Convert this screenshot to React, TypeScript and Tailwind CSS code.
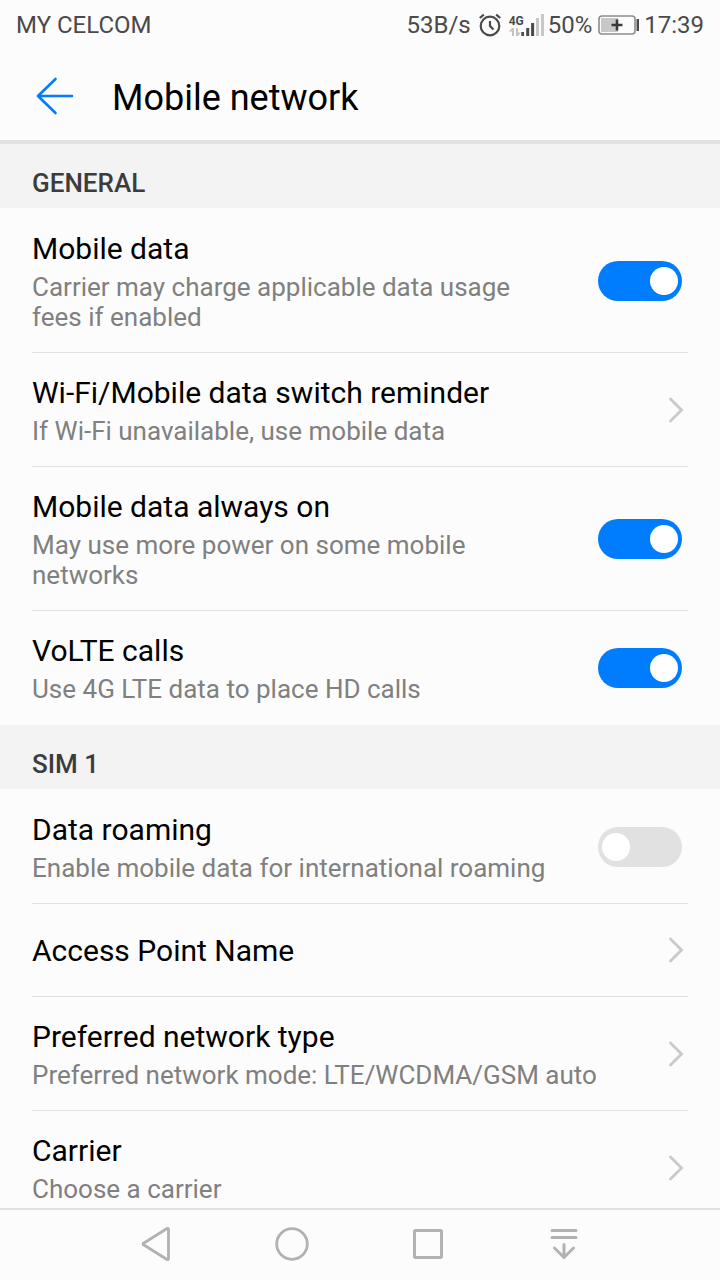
import React from 'react';

type Item = {
  id: string;
  title: string;
  summary?: string;
  kind: 'switch' | 'link';
  on?: boolean;
};

const general: Item[] = [
  {
    id: 'mobile-data',
    title: 'Mobile data',
    summary: 'Carrier may charge applicable data usage fees if enabled',
    kind: 'switch',
    on: true,
  },
  {
    id: 'switch-reminder',
    title: 'Wi-Fi/Mobile data switch reminder',
    summary: 'If Wi-Fi unavailable, use mobile data',
    kind: 'link',
  },
  {
    id: 'always-on',
    title: 'Mobile data always on',
    summary: 'May use more power on some mobile networks',
    kind: 'switch',
    on: true,
  },
  {
    id: 'volte',
    title: 'VoLTE calls',
    summary: 'Use 4G LTE data to place HD calls',
    kind: 'switch',
    on: true,
  },
];

const sim1: Item[] = [
  {
    id: 'roaming',
    title: 'Data roaming',
    summary: 'Enable mobile data for international roaming',
    kind: 'switch',
    on: false,
  },
  { id: 'apn', title: 'Access Point Name', kind: 'link' },
  {
    id: 'network-type',
    title: 'Preferred network type',
    summary: 'Preferred network mode: LTE/WCDMA/GSM auto',
    kind: 'link',
  },
  { id: 'carrier', title: 'Carrier', summary: 'Choose a carrier', kind: 'link' },
];

const StatusBar = () => (
  <div className="flex h-[50px] shrink-0 items-center justify-between px-4 text-2xl text-[#4a4a4a]">
    <span>MY CELCOM</span>
    <div className="flex items-center">
      <span>53B/s</span>
      {/* alarm */}
      <svg className="ml-2" width="22" height="24" viewBox="0 0 22 24" fill="none" stroke="#4a4a4a">
        <circle cx="11" cy="13" r="9.3" strokeWidth="2.2" />
        <path d="M11 8v5l3.5 3.5" strokeWidth="2.2" />
        <path d="M0.8 5 4.8 1.6M21.2 5 17.2 1.6" strokeWidth="2.2" />
      </svg>
      {/* network type, data arrows and signal */}
      <div className="ml-2 flex items-end">
        <div className="flex w-3 flex-col">
          <span className="font-['Liberation_Sans_Narrow',Roboto,sans-serif] text-xs leading-3 font-bold">4G</span>
          <svg width="12" height="10" viewBox="0 0 12 10" fill="#c4c4c4">
            <path d="M3 1h2v8H3V4.5H0zM7 1h2v4.5h3L9 9H7z" />
          </svg>
        </div>
        <svg width="23" height="23" viewBox="0 0 23 23">
          <g fill="#4a4a4a">
            <rect x="0.3" y="18" width="2.7" height="4" />
            <rect x="5.2" y="14" width="3" height="8" />
            <rect x="10.1" y="9" width="3" height="13" />
          </g>
          <g fill="#c8c8c8">
            <rect x="15" y="4" width="3" height="18" />
            <rect x="20" y="0" width="3" height="22" />
          </g>
        </svg>
      </div>
      <span className="ml-1">50%</span>
      {/* battery */}
      <svg className="ml-1.5" width="42" height="20" viewBox="0 0 42 20">
        <rect x="1" y="1" width="36" height="18" rx="3" fill="none" stroke="#8c8c8c" strokeWidth="1.6" />
        <rect x="3" y="3" width="17" height="14" fill="#c8c8c8" />
        <path d="M13.5 10h11M19 4.5v11" stroke="#3a3a3a" strokeWidth="2.6" />
        <rect x="38.5" y="4" width="2.5" height="12" fill="#4a4a4a" />
      </svg>
      <span className="ml-1">17:39</span>
    </div>
  </div>
);

const ItemText = ({ item }: { item: Item }) => (
  <span
    className={`flex min-w-0 flex-1 flex-col gap-[5px] ${
      item.summary ? 'pt-[22px] pb-5' : 'pt-[29px] pb-[27px]'
    }`}
  >
    <span className="text-[30px] leading-9 text-black">{item.title}</span>
    {item.summary && (
      <span className="text-[26px] leading-[30px] text-[#808080]">{item.summary}</span>
    )}
  </span>
);

const Row = ({ item, first }: { item: Item; first: boolean }) => {
  const border = first ? 'border-transparent' : 'border-[#e1e1e1]';

  if (item.kind === 'switch') {
    return (
      <li className={`border-t ${border}`}>
        <label htmlFor={item.id} className="flex items-center gap-12">
          <ItemText item={item} />
          <input
            id={item.id}
            type="checkbox"
            role="switch"
            defaultChecked={item.on}
            className="mr-1.5 flex h-10 w-21 shrink-0 appearance-none items-center rounded-full bg-[#e1e1e1] px-1 before:size-7 before:rounded-full before:bg-white checked:justify-end checked:bg-[#007dff]"
          />
        </label>
      </li>
    );
  }

  return (
    <li className={`border-t ${border}`}>
      <a href={`#${item.id}`} className="flex items-center gap-8">
        <ItemText item={item} />
        <svg className="mr-1 shrink-0" width="16" height="26" viewBox="0 0 16 26" fill="none">
          <path d="M2.5 2 13.5 13 2.5 24" stroke="#cacaca" strokeWidth="2.8" strokeLinecap="round" />
        </svg>
      </a>
    </li>
  );
};

const Section = ({ title, items }: { title: string; items: Item[] }) => (
  <section>
    <h2 className="flex h-16 items-center bg-[#f3f3f3] px-8 pt-3.5 text-[26px] font-medium text-[#3c3c3c]">
      {title}
    </h2>
    <ul className="px-8 pb-px">
      {items.map((item, i) => (
        <Row key={item.id} item={item} first={i === 0} />
      ))}
    </ul>
  </section>
);

const NavBar = () => (
  <nav className="flex h-[72px] shrink-0 items-center justify-center gap-24 border-t-2 border-[#e1e1e1] pb-0.5">
    <button type="button" aria-label="Back">
      <svg width="40" height="40" viewBox="0 0 40 40" fill="none" stroke="#b2b2b2" strokeWidth="2.8" strokeLinejoin="round">
        <path d="M32.5 5.5v29a1 1 0 0 1-1.5 1L8 21a1 1 0 0 1 0-2L31 4.500a1 1 0 0 1 1.500 1z" />
      </svg>
    </button>
    <button type="button" aria-label="Home">
      <svg width="40" height="40" viewBox="0 0 40 40" fill="none" stroke="#b2b2b2" strokeWidth="2.8">
        <circle cx="20" cy="20" r="15.3" />
      </svg>
    </button>
    <button type="button" aria-label="Recent apps">
      <svg width="40" height="40" viewBox="0 0 40 40" fill="none" stroke="#b2b2b2" strokeWidth="3">
        <rect x="6.5" y="6.5" width="27" height="27" rx="1.2" />
      </svg>
    </button>
    <button type="button" aria-label="Notifications">
      <svg width="40" height="40" viewBox="0 0 40 40" fill="none" stroke="#b2b2b2" strokeWidth="3" strokeLinecap="round">
        <path d="M8 6.5h24M8 13.5h24M20 20.5V33M10.5 24l9.5 9.5 9.5-9.5" />
      </svg>
    </button>
  </nav>
);

const App = () => {
  return (
    <div className="flex h-screen flex-col bg-[#fcfcfc] font-[Roboto,sans-serif]">
      <StatusBar />
      <header className="flex h-[94px] shrink-0 items-center gap-[38px] border-b-4 border-[#e1e1e1] px-9 pt-0.5">
        <button type="button" aria-label="Navigate up">
          <svg width="38" height="38" viewBox="0 0 38 38" fill="none" stroke="#007dff" strokeWidth="2.6" strokeLinecap="round" strokeLinejoin="round">
            <path d="M36 19H2M19.5 2 2 19l17.5 17" />
          </svg>
        </button>
        <h1 className="pt-1 text-4xl text-black">Mobile network</h1>
      </header>
      <main className="min-h-0 flex-1 overflow-y-auto [scrollbar-width:none]">
        <Section title="GENERAL" items={general} />
        <Section title="SIM 1" items={sim1} />
      </main>
      <NavBar />
    </div>
  );
};

export default App;
